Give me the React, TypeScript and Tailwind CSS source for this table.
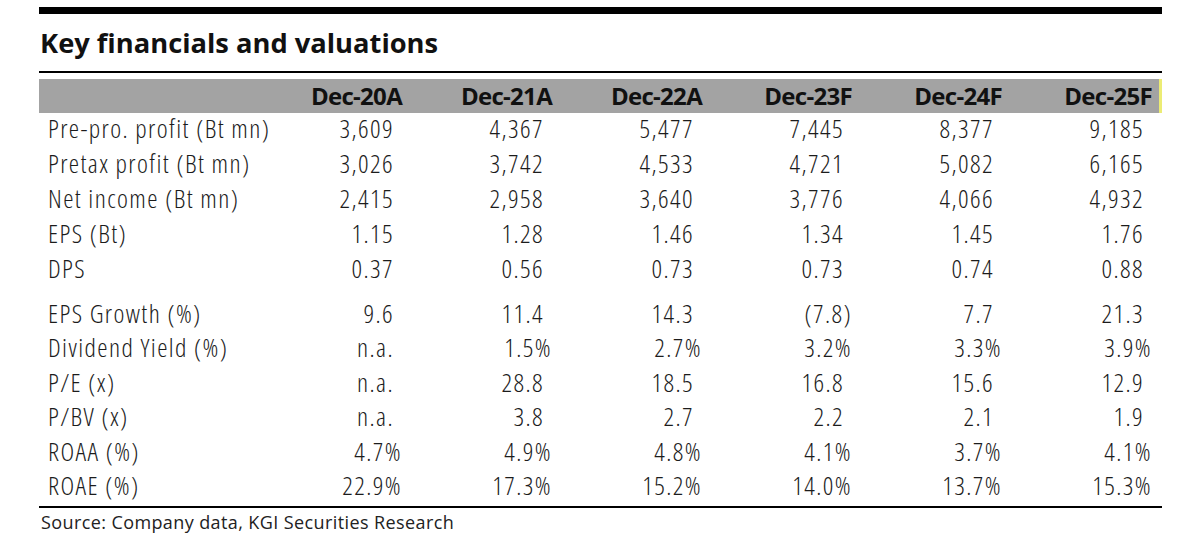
const years = ["Dec-20A", "Dec-21A", "Dec-22A", "Dec-23F", "Dec-24F", "Dec-25F"];

const topRows: [string, string[]][] = [
  ["Pre-pro. profit (Bt mn)", ["3,609", "4,367", "5,477", "7,445", "8,377", "9,185"]],
  ["Pretax profit (Bt mn)", ["3,026", "3,742", "4,533", "4,721", "5,082", "6,165"]],
  ["Net income (Bt mn)", ["2,415", "2,958", "3,640", "3,776", "4,066", "4,932"]],
  ["EPS (Bt)", ["1.15", "1.28", "1.46", "1.34", "1.45", "1.76"]],
  ["DPS", ["0.37", "0.56", "0.73", "0.73", "0.74", "0.88"]],
];

const ratioRows: [string, string[]][] = [
  ["EPS Growth (%)", ["9.6", "11.4", "14.3", "(7.8)", "7.7", "21.3"]],
  ["Dividend Yield (%)", ["n.a.", "1.5%", "2.7%", "3.2%", "3.3%", "3.9%"]],
  ["P/E (x)", ["n.a.", "28.8", "18.5", "16.8", "15.6", "12.9"]],
  ["P/BV (x)", ["n.a.", "3.8", "2.7", "2.2", "2.1", "1.9"]],
  ["ROAA (%)", ["4.7%", "4.9%", "4.8%", "4.1%", "3.7%", "4.1%"]],
  ["ROAE (%)", ["22.9%", "17.3%", "15.2%", "14.0%", "13.7%", "15.3%"]],
];

// values ending in % or ) sit flush right, plain numbers leave room for a ")"
function Cell({ v }: { v: string }) {
  const flush = v.endsWith("%") || v.endsWith(")");
  return <div className={`text-right ${flush ? "" : "pr-[8px]"}`}>{v}</div>;
}

function Row({ label, vals, tight }: { label: string; vals: string[]; tight?: boolean }) {
  return (
    <div
      className={`grid grid-cols-[204px_repeat(6,150px)] pl-[9px] pr-[10px] leading-[31px] ${
        tight ? "h-[34.4px]" : "h-[35px]"
      }`}
    >
      <div className="whitespace-nowrap">{label}</div>
      {vals.map((v, i) => (
        <Cell key={i} v={v} />
      ))}
    </div>
  );
}

export default function App() {
  return (
    <div className="w-[1200px] h-[540px] bg-white pt-[7px] pl-[39px] font-['Open_Sans',sans-serif]">
      <div className="w-[1123px]">
        <div className="h-[7px] bg-black" />
        <h2 className="pt-[15px] pb-[15px] pl-[1px] text-[27.3px] leading-[27px] font-bold text-[#111]">
          Key financials and valuations
        </h2>
        <div className="h-[2px] bg-black" />

        {/* Header */}
        <div className="mt-[6px] h-[34px] bg-[#a3a3a3] border-r-[3px] border-[#ecec74] grid grid-cols-[204px_repeat(6,150px)] pl-[9px] pr-[7px] text-[24px] leading-[34px] font-bold tracking-[-0.7px] text-[#111]">
          <div />
          {years.map(y => (
            <div key={y} className="text-right">
              {y}
            </div>
          ))}
        </div>

        {/* Body */}
        <div className="text-[26px] font-light font-stretch-[75%] tracking-[1.4px] text-[#1c1c1c]">
          {topRows.map(([label, vals]) => (
            <Row key={label} label={label} vals={vals} />
          ))}
          <div className="h-[10px]" />
          {ratioRows.map(([label, vals]) => (
            <Row key={label} label={label} vals={vals} tight />
          ))}
        </div>

        <div className="mt-[2px] h-[2px] bg-black" />
        <p className="pt-[4px] pl-[2px] text-[18px] leading-[20px] tracking-[0.4px] text-[#222]">
          Source: Company data, KGI Securities Research
        </p>
      </div>
    </div>
  );
}
